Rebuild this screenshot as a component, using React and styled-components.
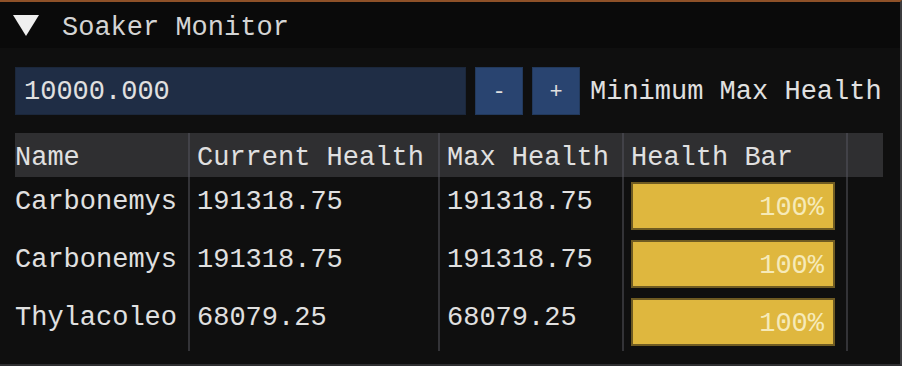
import React from "react";
import styled, { createGlobalStyle } from "styled-components";

const GlobalStyle = createGlobalStyle`
  html, body {
    margin: 0;
    padding: 0;
    background: #0f0f0f;
  }
  body {
    font-family: "Liberation Mono", "DejaVu Sans Mono", monospace;
  }
`;

const Window = styled.div`
  width: 902px;
  height: 366px;
  box-sizing: border-box;
  display: flex;
  flex-direction: column;
  background: #0f0f0f;
  border-top: 2px solid #8e5128;
  border-right: 2px solid #3c3c3f;
  border-bottom: 2px solid #2e2e31;
  overflow: hidden;
  font-size: 27px;
  color: #e0e0e0;
`;

const TitleBar = styled.div`
  height: 46px;
  flex: none;
  box-sizing: border-box;
  display: flex;
  align-items: center;
  gap: 23px;
  padding-left: 13px;
  background: #0a0a0a;
  color: #d4d4d4;
`;

const TitleText = styled.span`
  padding-top: 5px;
`;

const Body = styled.div`
  padding: 19px 17px 0 15px;
  display: flex;
  flex-direction: column;
`;

const Controls = styled.div`
  display: flex;
  align-items: center;
  gap: 9px;
`;

const NumberInput = styled.div`
  width: 451px;
  height: 48px;
  box-sizing: border-box;
  display: flex;
  align-items: center;
  padding: 2px 0 0 8px;
  background: #1f2d45;
  border: 1px solid #1b273b;
`;

const StepButton = styled.div`
  width: 48px;
  height: 48px;
  box-sizing: border-box;
  display: flex;
  align-items: center;
  justify-content: center;
  padding-top: 2px;
  background: #294470;
  border: 1px solid #22395c;
  font-size: 22px;
`;

const Label = styled.span`
  margin-left: 1px;
  padding-top: 2px;
  white-space: nowrap;
`;

const Table = styled.div`
  margin-top: 18px;
  display: grid;
  grid-template-columns: 173px 250px 184px 224px 37px;
`;

const HeaderCell = styled.div`
  height: 44px;
  box-sizing: border-box;
  display: flex;
  align-items: center;
  padding-top: 6px;
  padding-left: ${(p) => (p.$first ? "0" : "7px")};
  background: #2f2f31;
  border-left: ${(p) => (p.$first ? "none" : "2px solid #424248")};
  white-space: nowrap;
`;

const Cell = styled.div`
  height: 58px;
  box-sizing: border-box;
  padding-top: 10px;
  padding-left: ${(p) => (p.$first ? "0" : "7px")};
  line-height: 31px;
  border-left: ${(p) => (p.$first ? "none" : "2px solid #333337")};
  white-space: nowrap;
`;

const BarCell = styled.div`
  height: 58px;
  box-sizing: border-box;
  padding: 5px 11px 0 7px;
  border-left: 2px solid #333337;
`;

const Bar = styled.div`
  height: 48px;
  box-sizing: border-box;
  display: flex;
  align-items: center;
  justify-content: flex-end;
  padding: 4px 9px 0 0;
  background: #dfb73e;
  border: 2px solid #6f5b22;
  color: #f6eab8;
`;

const rows = [
  { name: "Carbonemys", current: "191318.75", max: "191318.75", pct: 100 },
  { name: "Carbonemys", current: "191318.75", max: "191318.75", pct: 100 },
  { name: "Thylacoleo", current: "68079.25", max: "68079.25", pct: 100 },
];

export default function App() {
  return (
    <>
      <GlobalStyle />
      <Window>
        <TitleBar>
          <svg width="26" height="21" viewBox="0 0 26 21">
            <polygon points="0,0 26,0 13,21" fill="#efefef" />
          </svg>
          <TitleText>Soaker Monitor</TitleText>
        </TitleBar>
        <Body>
          <Controls>
            <NumberInput>10000.000</NumberInput>
            <StepButton>-</StepButton>
            <StepButton>+</StepButton>
            <Label>Minimum Max Health</Label>
          </Controls>
          <Table>
            <HeaderCell $first>Name</HeaderCell>
            <HeaderCell>Current Health</HeaderCell>
            <HeaderCell>Max Health</HeaderCell>
            <HeaderCell>Health Bar</HeaderCell>
            <HeaderCell />
            {rows.map((r, i) => (
              <React.Fragment key={i}>
                <Cell $first>{r.name}</Cell>
                <Cell>{r.current}</Cell>
                <Cell>{r.max}</Cell>
                <BarCell>
                  <Bar>{r.pct}%</Bar>
                </BarCell>
                <Cell />
              </React.Fragment>
            ))}
          </Table>
        </Body>
      </Window>
    </>
  );
}
